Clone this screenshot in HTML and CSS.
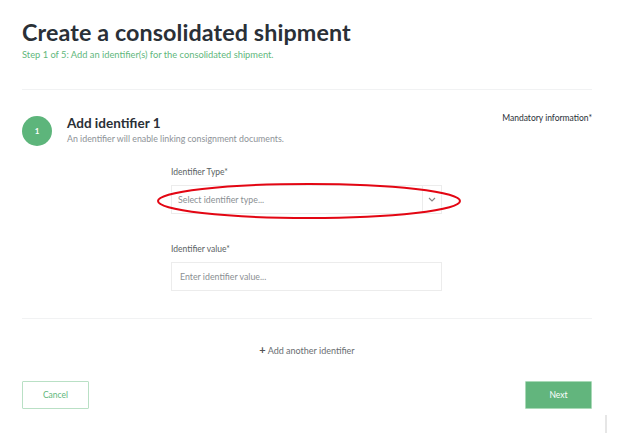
FILE: index.html
```html
<!DOCTYPE html>
<html>
<head>
<meta charset="utf-8">
<link rel="stylesheet" href="styles.css">
</head>
<body>
<div class="page">
  <header class="head">
    <h1 class="title">Create a consolidated shipment</h1>
    <p class="step">Step 1 of 5: Add an identifier(s) for the consolidated shipment.</p>
  </header>
  <hr class="rule rule-top">
  <section class="section">
    <div class="sec-head">
      <div class="badge">1</div>
      <div class="sec-text">
        <h2 class="sec-title">Add identifier 1</h2>
        <p class="sec-desc">An identifier will enable linking consignment documents.</p>
      </div>
      <div class="mandatory">Mandatory information*</div>
    </div>
    <div class="form">
      <div class="field">
        <label class="label">Identifier Type*</label>
        <div class="select">
          <span class="placeholder">Select identifier type...</span>
          <span class="chev"><svg width="8" height="5" viewBox="0 0 8 5"><path d="M1 1l3 3 3-3" fill="none" stroke="#888" stroke-width="1.2"/></svg></span>
          <svg class="ellipse" width="306" height="38" viewBox="0 0 306 38"><ellipse cx="153" cy="19" rx="151" ry="17" fill="none" stroke="#e30613" stroke-width="2"/></svg>
        </div>
      </div>
      <div class="field field-2">
        <label class="label">Identifier value*</label>
        <div class="input"><span class="placeholder">Enter identifier value...</span></div>
      </div>
    </div>
  </section>
  <hr class="rule rule-bottom">
  <div class="add"><span class="plus">+</span> Add another identifier</div>
  <div class="actions">
    <button class="btn btn-cancel">Cancel</button>
    <button class="btn btn-next">Next</button>
  </div>
</div>
<div class="scroll"></div>
</body>
</html>
```
FILE: styles.css
```css
* { box-sizing: border-box; }
html, body { margin: 0; padding: 0; background: #fff; }
body { font-family: Lato, "Open Sans", sans-serif; color: #2b3138; width: 629px; height: 446px; overflow: hidden; position: relative; }
.page { padding: 17px 37px 0 22px; }
.title { margin: 0; font-size: 23.3px; font-weight: 700; line-height: 30px; letter-spacing: 0.1px; color: #2a3037; }
.step { margin: 2px 0 0; font-size: 9.3px; line-height: 11px; color: #5fb77c; }
.rule { border: 0; border-top: 1px solid #f1f2f3; margin: 0; }
.rule-top { margin-top: 29px; }
.section { padding-top: 25px; }
.sec-head { display: flex; align-items: flex-start; }
.badge { width: 30px; height: 30px; border-radius: 50%; background: #5db57b; color: #fff; font-size: 8px; font-weight: 700; display: flex; align-items: center; justify-content: center; margin-top: 1px; }
.sec-text { margin-left: 15px; flex: 1; }
.sec-title { margin: 0; font-size: 13.5px; font-weight: 700; line-height: 16px; color: #2a3037; }
.sec-desc { margin: 3px 0 0; font-size: 8.8px; line-height: 10px; color: #8d9297; }
.mandatory { font-size: 8.5px; line-height: 10px; color: #2a3037; margin-top: -2px; }
.form { margin-left: 149px; width: 271px; padding-top: 21px; }
.label { display: block; font-size: 8.5px; line-height: 10px; color: #5a5f64; }
.select, .input { position: relative; margin-top: 8px; height: 29px; border: 1px solid #ececec; display: flex; align-items: center; }
.placeholder { font-size: 8.8px; color: #8b8f93; padding-left: 6px; flex: 1; }
.input .placeholder { padding-left: 8px; }
.chev { width: 19px; height: 100%; border-left: 1px solid #ececec; display: flex; align-items: center; justify-content: center; }
.ellipse { position: absolute; left: -16px; top: -4px; }
.field-2 { margin-top: 30px; }
.rule-bottom { margin-top: 27px; }
.add { text-align: center; font-size: 9px; color: #6a6e72; margin-top: 25px; line-height: 12px; }
.plus { font-weight: 700; font-size: 11px; color: #555; }
.actions { display: flex; justify-content: space-between; margin-top: 24px; }
.btn { width: 67px; height: 28px; font-family: inherit; font-size: 8.5px; border-radius: 1px; cursor: pointer; }
.btn-cancel { background: #fff; border: 1px solid #b9e0c5; color: #5fb77c; }
.btn-next { background: #62b57d; border: 1px solid #a9d9b7; color: #fff; }
.scroll { position: absolute; left: 605px; top: 415px; width: 2px; height: 18px; background: #e6e6e6; }
```
